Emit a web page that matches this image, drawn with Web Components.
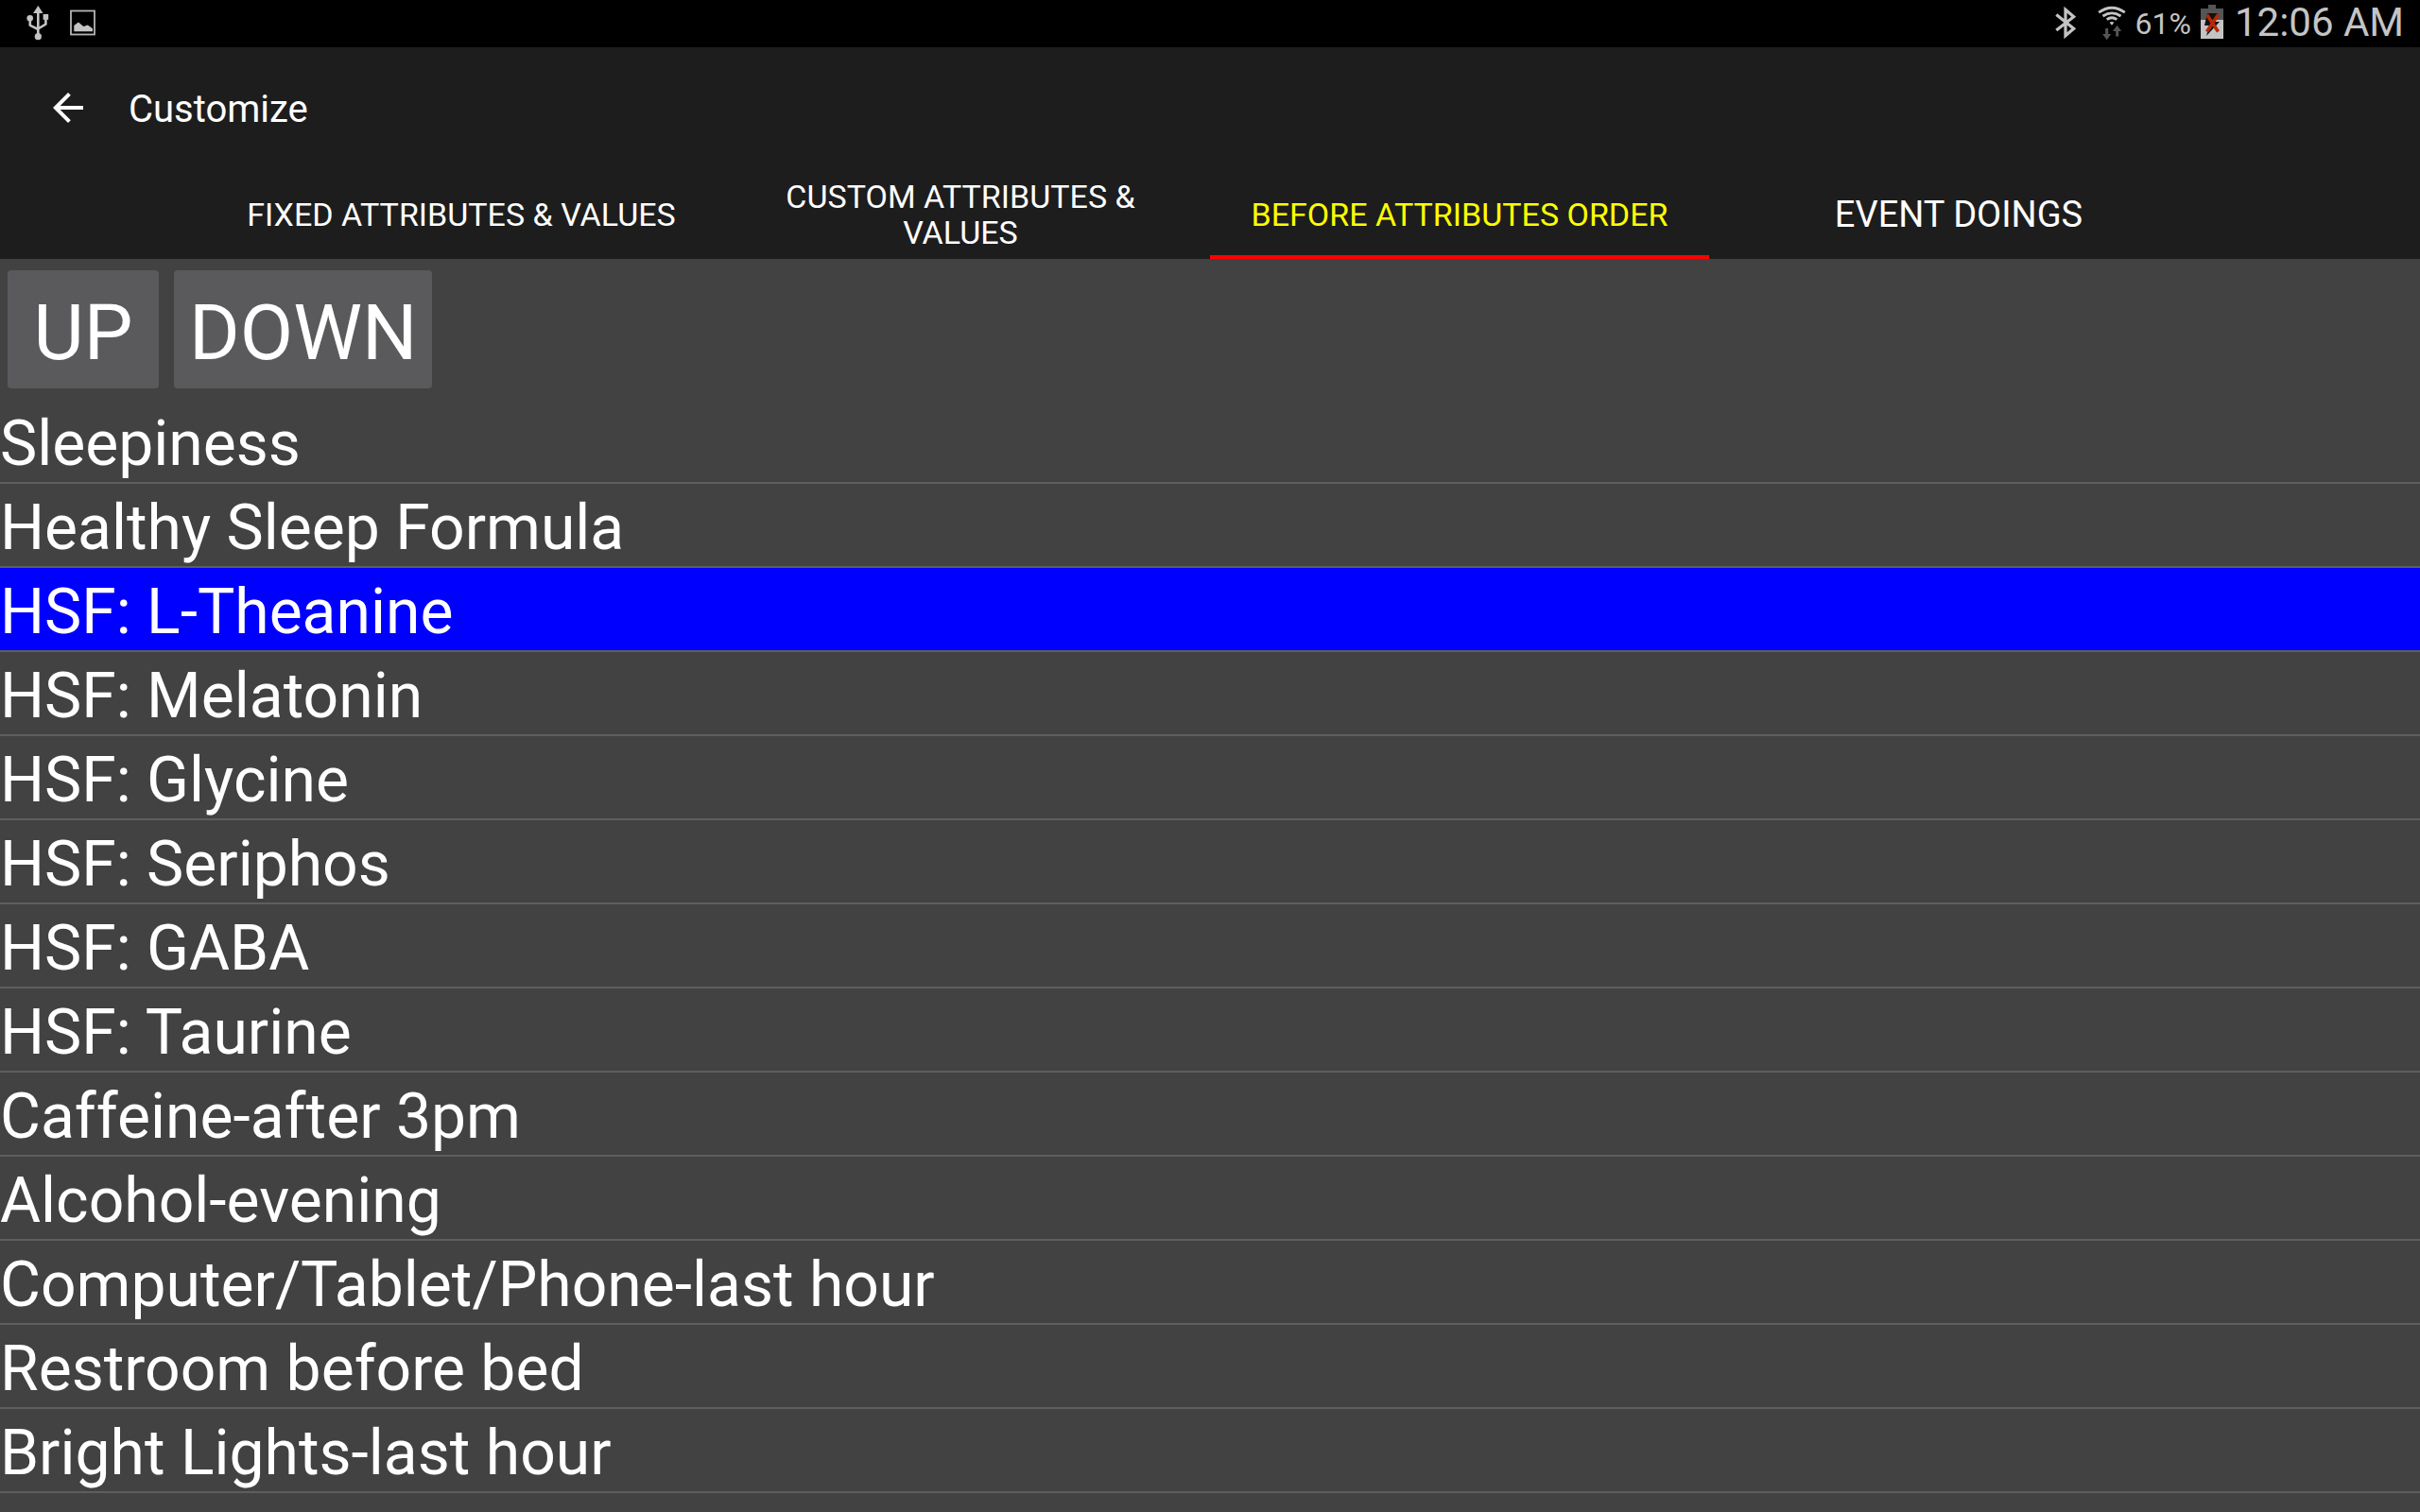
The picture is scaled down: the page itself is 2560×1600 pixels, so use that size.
<!DOCTYPE html>
<html lang="en">
<head>
<meta charset="utf-8">
<title>Customize</title>
<style>
  html { height: 100%; }
  body { margin: 0; height: 100%; overflow: hidden; background: #424242; color: #fff; font-family: Roboto, sans-serif; }
</style>
</head>
<body>
<customize-screen></customize-screen>
<script>
const define = (name, html) => customElements.define(name, class extends HTMLElement {
  connectedCallback() {
    if (this.shadowRoot) return;
    this.attachShadow({ mode: 'open' }).innerHTML = html;
  }
});

define('status-bar', `
<style>
  :host { display: flex; align-items: center; justify-content: space-between; height: 50px; padding: 0 17px 0 28px; background: #000; color: #c4c4c4; box-sizing: border-box; }
  .group { display: flex; align-items: center; }
  svg { display: block; flex: none; }
  .left { gap: 22px; }
  .bt { margin-right: 22px; }
  .wifi { margin-right: 10px; }
  .pct { font-size: 32px; line-height: 50px; margin-right: 10px; }
  .bat { margin-right: 12px; }
  .time { font-size: 42px; line-height: 47px; padding-bottom: 3px; }
</style>
<div class="group left">
  <svg width="24" height="50" viewBox="28 0 24 50" fill="#c4c4c4" role="img" aria-label="USB">
    <path d="M40.300 6l5.200 8h-10.400z"/>
    <path d="M40.300 12v25M31.800 20v6.800l8.500 4.200M48.400 19v6.500l-8.100 5" fill="none" stroke="#c4c4c4" stroke-width="2.600"/>
    <circle cx="31.700" cy="19.300" r="3.300"/><rect x="45.600" y="15" width="5.600" height="5.800"/><circle cx="40.300" cy="38.700" r="3.600"/>
  </svg>
  <svg width="27" height="50" viewBox="74 0 27 50" role="img" aria-label="Picture">
    <rect x="75" y="11.500" width="25" height="25" fill="none" stroke="#b4b4b4" stroke-width="1.800"/>
    <path d="M78.300 33.300v-6.300l4.700-3.500 5.300 4.500 4.500-1.600 5.200 3.800v3.100z" fill="#c4c4c4"/>
  </svg>
</div>
<div class="group">
  <svg class="bt" width="23" height="50" viewBox="2173 0 23 50" fill="none" stroke="#c4c4c4" stroke-width="3.200" role="img" aria-label="Bluetooth">
    <path d="M2174.300 15.500l18.400 14.700-8.700 7.500V10.300l8.700 7.400-18.400 14.300"/>
  </svg>
  <svg class="wifi" width="30" height="50" viewBox="2218 0 30 50" fill="none" stroke="#c4c4c4" stroke-width="2.800" role="img" aria-label="Wi-Fi">
    <path d="M2219.200 13.200q13.800-10 27.600 0M2223.500 17q9.500-6.400 19 0M2227.700 20.700q5.300-4 10.600 0"/>
    <path d="M2230.600 23.700q2.400-1.400 4.800 0l-2.400 3z" fill="#c4c4c4" stroke="none"/>
    <path d="M2226.200 30h3v6h3l-4.500 6.300-4.500-6.300h3zM2237.200 38.500h3V33h3l-4.700-6.300-4.500 6.300h3.200z" fill="#555" stroke="none"/>
  </svg>
  <span class="pct">61%</span>
  <svg class="bat" width="24" height="50" viewBox="2327 0 24 50" role="img" aria-label="Battery">
    <path d="M2335 5h8v4h8v12h-24V9h8z" fill="#555"/>
    <path d="M2327 21h24v20h-24z" fill="#c4c4c4"/>
    <path d="M2334 14h11l-3 9h5l-14 15 3-11h-5z" fill="#111"/>
    <path d="M2333.500 15.500l12 18M2345.500 15.500l-12 18" stroke="#b82808" stroke-width="3.600"/>
  </svg>
  <time class="time">12:06 AM</time>
</div>`);

define('app-bar', `
<style>
  :host { display: flex; align-items: center; height: 130px; padding-bottom: 2px; box-sizing: border-box; background: #1d1d1d; }
  button { all: unset; width: 144px; display: flex; justify-content: center; margin-right: -8px; }
  svg { display: block; }
  h1 { margin: 0; padding-top: 4px; font-size: 40px; line-height: 48px; font-weight: 400; }
</style>
<button type="button" aria-label="Back">
  <svg width="48" height="48" viewBox="0 0 24 24" fill="#fff"><path d="M20 11H7.830l5.590-5.590L12 4l-8 8 8 8 1.410-1.410L7.830 13H20z"/></svg>
</button>
<h1><slot></slot></h1>`);

define('tab-strip', `
<style>
  :host { display: flex; justify-content: center; height: 94px; background: #1d1d1d; }
</style>
<slot></slot>`);

define('tab-item', `
<style>
  :host { flex: 0 0 528px; display: flex; }
  button { all: unset; box-sizing: border-box; display: flex; align-items: center; justify-content: center; width: 100%; padding: 8px 32px 4px; text-align: center; font-size: 34px; line-height: 38px; border-bottom: 4px solid transparent; text-transform: uppercase; }
  :host([large]) button { font-size: 38px; }
  :host([selected]) button { color: #ff0; border-color: #f00; }
</style>
<button type="button" role="tab"><span><slot></slot></span></button>`);

define('raised-button', `
<style>
  :host { display: block; }
  button { all: unset; box-sizing: border-box; display: block; min-width: 160px; height: 125px; padding: 0 16px; border-radius: 4px; background: #5a5a5c; text-align: center; font-size: 82px; line-height: 132px; }
</style>
<button type="button"><slot></slot></button>`);

define('list-row', `
<style>
  :host { display: block; height: 87px; border-bottom: 2px solid #5e5e5e; font-size: 66px; line-height: 93px; white-space: nowrap; }
  :host([selected]) { background: #00f; }
</style>
<slot></slot>`);

define('customize-screen', `
<style>
  :host { display: flex; flex-direction: column; height: 100%; overflow: hidden; }
  status-bar, app-bar, tab-strip, .actions { flex: none; }
  .actions { display: flex; gap: 16px; padding: 12px 8px; }
  .list { flex: 1; overflow: hidden; }
</style>
<status-bar></status-bar>
<app-bar>Customize</app-bar>
<tab-strip role="tablist">
  <tab-item>Fixed Attributes &amp; Values</tab-item>
  <tab-item>Custom Attributes &amp; Values</tab-item>
  <tab-item selected>Before Attributes Order</tab-item>
  <tab-item large>Event Doings</tab-item>
</tab-strip>
<div class="actions"><raised-button>UP</raised-button><raised-button>DOWN</raised-button></div>
<div class="list" role="list">
  <list-row role="listitem">Sleepiness</list-row>
  <list-row role="listitem">Healthy Sleep Formula</list-row>
  <list-row role="listitem" selected>HSF: L-Theanine</list-row>
  <list-row role="listitem">HSF: Melatonin</list-row>
  <list-row role="listitem">HSF: Glycine</list-row>
  <list-row role="listitem">HSF: Seriphos</list-row>
  <list-row role="listitem">HSF: GABA</list-row>
  <list-row role="listitem">HSF: Taurine</list-row>
  <list-row role="listitem">Caffeine-after 3pm</list-row>
  <list-row role="listitem">Alcohol-evening</list-row>
  <list-row role="listitem">Computer/Tablet/Phone-last hour</list-row>
  <list-row role="listitem">Restroom before bed</list-row>
  <list-row role="listitem">Bright Lights-last hour</list-row>
</div>`);
</script>
</body>
</html>
